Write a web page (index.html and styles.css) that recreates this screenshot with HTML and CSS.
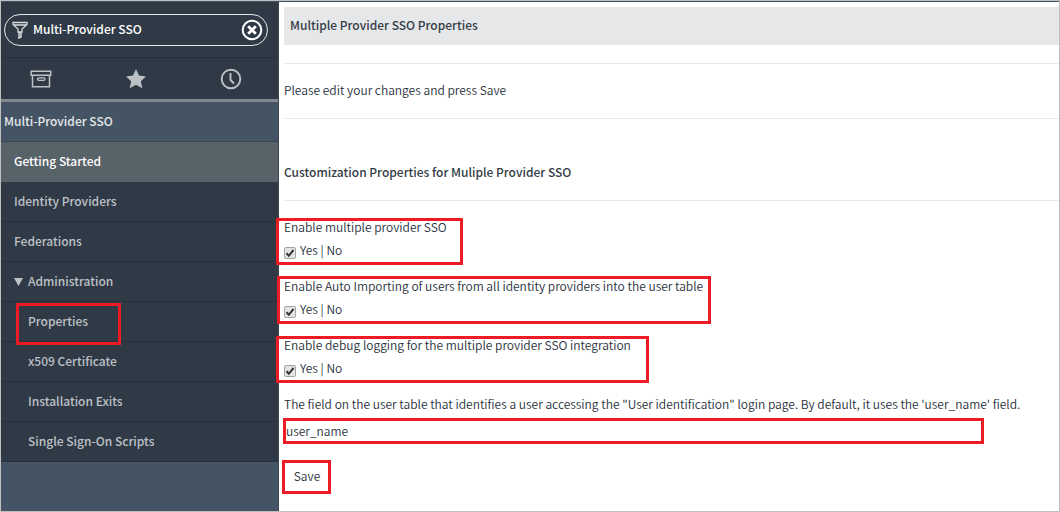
FILE: index.html
```html
<!DOCTYPE html>
<html lang="en">
<head>
<meta charset="utf-8">
<title>Multiple Provider SSO Properties</title>
<link rel="stylesheet" href="styles.css">
</head>
<body>
<div class="app">
  <aside class="sidebar">
    <div class="search">
      <div class="search-box">
        <svg class="funnel" width="16" height="18" viewBox="0 0 16 18" fill="none" stroke="currentColor"><path d="M1 1.500h14v2L10 8v3H6V8L1 3.500zM2 4h12" stroke-width="1.300"/><path d="M7 11v6l2-1v-5" stroke-width="1.500"/></svg>
        <input class="search-input" type="text" value="Multi-Provider SSO" aria-label="Filter navigator">
        <button class="clear" type="button" aria-label="Clear filter">
          <svg width="22" height="22" viewBox="0 0 22 22" fill="none" stroke="currentColor"><circle cx="11" cy="11" r="9.300" stroke-width="2"/><path d="M7.200 7.200l7.600 7.600M14.800 7.200l-7.600 7.600" stroke-width="2.800"/></svg>
        </button>
      </div>
    </div>
    <div class="tabs">
      <button class="tab" type="button" aria-label="All applications">
        <svg width="22" height="20" viewBox="0 0 22 20" fill="none" stroke="currentColor" stroke-width="1.500"><path d="M1.200 2.200h19.500v4H1.200zM2.500 6.200v11.500h17V6.200"/><rect x="7.500" y="8.800" width="7.500" height="2.600" rx="1.300" stroke-width="1.300"/></svg>
      </button>
      <button class="tab" type="button" aria-label="Favorites">
        <svg width="22" height="20" viewBox="0 0 22 20" fill="currentColor"><path d="M11 0l3 6.600 7 .8-5.200 4.900 1.500 7L11 15.700l-6.300 3.600 1.500-7L1 7.400l7-.8z"/></svg>
      </button>
      <button class="tab" type="button" aria-label="History">
        <svg width="22" height="22" viewBox="0 0 22 22" fill="none" stroke="currentColor" stroke-width="1.900"><circle cx="11" cy="11" r="9.300"/><path d="M10.500 5v7l3.500 3.500"/></svg>
      </button>
    </div>
    <nav class="nav">
      <a class="item app-name" href="#">Multi-Provider SSO</a>
      <a class="item active" href="#">Getting Started</a>
      <a class="item" href="#">Identity Providers</a>
      <a class="item" href="#">Federations</a>
      <a class="item" href="#"><svg class="caret" width="9" height="8" viewBox="0 0 9 8" fill="currentColor"><path d="M0 0h9L4.500 8z"/></svg>Administration</a>
      <a class="item sub" href="#">Properties<span class="mark mark-nav"></span></a>
      <a class="item sub" href="#">x509 Certificate</a>
      <a class="item sub" href="#">Installation Exits</a>
      <a class="item sub" href="#">Single Sign-On Scripts</a>
    </nav>
  </aside>
  <main class="content">
    <h1 class="title">Multiple Provider SSO Properties</h1>
    <p class="intro">Please edit your changes and press Save</p>
    <h2 class="section">Customization Properties for Muliple Provider SSO</h2>
    <form class="form">
      <div class="property">
        <div class="question">Enable multiple provider SSO</div>
        <label class="choice"><input class="check" type="checkbox" checked>Yes | No</label>
        <span class="mark mark-enable"></span>
      </div>
      <div class="property">
        <div class="question">Enable Auto Importing of users from all identity providers into the user table</div>
        <label class="choice"><input class="check" type="checkbox" checked>Yes | No</label>
        <span class="mark mark-import"></span>
      </div>
      <div class="property">
        <div class="question">Enable debug logging for the multiple provider SSO integration</div>
        <label class="choice"><input class="check" type="checkbox" checked>Yes | No</label>
        <span class="mark mark-debug"></span>
      </div>
      <label class="question" for="field">The field on the user table that identifies a user accessing the "User identification" login page. By default, it uses the 'user_name' field.</label>
      <input class="field" id="field" type="text" value="user_name">
      <button class="save" type="button">Save</button>
    </form>
  </main>
</div>
</body>
</html>
```
FILE: styles.css
```css
* { box-sizing: border-box; }
body {
  margin: 0;
  font: 350 12px/20px "Noto Sans CJK SC", "Open Sans", sans-serif;
  color: #27303b;
}
button, input { font: inherit; color: inherit; margin: 0; }
button { padding: 0; border: 0; background: none; }
svg { display: block; flex: none; }

.app {
  display: flex;
  min-height: 100vh;
  border: 1px solid #c0c0c0;
  background: #fff;
}

.sidebar {
  flex: 0 0 278px;
  background: #455464;
  border-top: 1px solid #455464;
  border-right: 1px solid #3d4854;
  color: #bec1c6;
  font-weight: 500;
}
.search {
  padding: 12px 10px 11px 3px;
  background: #303a46;
  border-bottom: 1px solid #28313b;
}
.search-box {
  display: flex;
  align-items: center;
  height: 32px;
  padding: 0 4px 0 7px;
  border: 1px solid #e6e8ea;
  border-radius: 16px;
  color: #fff;
}
.funnel { color: #d8dbde; }
.search-input {
  flex: 1;
  min-width: 0;
  padding: 0 0 2px 5px;
  border: 0;
  background: none;
  outline: 0;
}
.tabs {
  display: flex;
  align-items: center;
  justify-content: space-between;
  height: 44px;
  padding: 0 36px 0 29px;
  background: #303a46;
  border-bottom: 3px solid #81878f;
}

.item {
  position: relative;
  display: flex;
  align-items: center;
  height: 40px;
  padding: 0 0 2px 13px;
  background: #303a46;
  border-bottom: 1px solid #28313b;
  color: inherit;
  text-decoration: none;
}
.app-name { padding-left: 3px; background: #455464; color: #e6e8ea; border-color: #3a4653; }
.active { background: #586269; color: #fff; border-color: #586269; }
.sub { padding-left: 27px; }
.caret { margin: 2px 5px 0 0; }

.content {
  position: relative;
  flex: 1;
  min-width: 0;
  padding-left: 5px;
  border-top: 1px solid #455464;
}
.title, .section { font-size: 12px; font-weight: 500; color: #343d47; }
.title {
  margin: 5px 0 18px;
  padding: 8px 6px 10px;
  background: #e6e7e9;
}
.intro {
  margin: 0;
  padding: 16px 0 18px;
  border: solid #e6e8ea;
  border-width: 1px 0;
}
.section {
  margin: 0;
  padding: 43px 0 18px;
  border-bottom: 1px solid #e6e8ea;
}
.form { padding-top: 15px; }
.property { position: relative; height: 59px; }
.question { display: block; line-height: 22px; }
.choice { display: flex; width: max-content; line-height: 24px; }
.check {
  appearance: none;
  width: 12px;
  height: 12px;
  margin: 9px 4px 0 0;
  border: 1px solid #a3a3a3;
  border-radius: 2px;
  background: #e4e4e4 url("data:image/svg+xml,%3Csvg xmlns='http://www.w3.org/2000/svg' viewBox='0 0 10 10'%3E%3Cpath d='M1.500 5.300l2.300 2.500L8.500 2' fill='none' stroke='%23383838' stroke-width='2'/%3E%3C/svg%3E");
}
.field {
  display: block;
  width: calc(100% - 74px);
  height: 26px;
  margin: 3px 0 16px -1px;
  padding: 0 0 2px;
  border: 3px solid #ed1c24;
  background: #fff;
  outline: 0;
}
.save {
  width: 49px;
  height: 34px;
  margin-left: -2px;
  padding: 0 0 2px 1px;
  border: 3px solid #ed1c24;
}

/* Red call-out frames drawn over the page */
.mark { position: absolute; border: 3px solid #ed1c24; pointer-events: none; }
.mark-nav { left: 15px; top: 1px; width: 105px; height: 42px; z-index: 1; }
.mark-enable { left: -8px; top: 2px; width: 187px; height: 47px; }
.mark-import { left: -7px; top: 1px; width: 434px; height: 48px; }
.mark-debug { left: -8px; top: 2px; width: 373px; height: 47px; }
```
